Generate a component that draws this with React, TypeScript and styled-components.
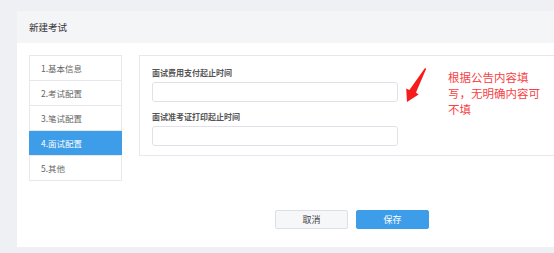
import styled, { createGlobalStyle } from "styled-components";

const GlobalStyle = createGlobalStyle`
  html, body {
    margin: 0;
    padding: 0;
    overflow: hidden;
    background: #eef0f4;
    font-family: "Noto Sans CJK SC", "Noto Sans", sans-serif;
  }
`;

const Page = styled.div`
  padding: 11px 0 0 17px;
`;

/* the card runs on past the right edge of the shot, so it has no right side */
const Card = styled.div`
  background: #fff;
`;

const CardHeader = styled.div`
  height: 32px;
  display: flex;
  align-items: center;
  padding-left: 12px;
  background: #f4f5f7;
  font-size: 9.5px;
  color: #333;
`;

const CardBody = styled.div`
  padding: 12px 0 18px 12px;
`;

const Row = styled.div`
  display: flex;
  align-items: flex-start;
  gap: 17px;
`;

const Steps = styled.ul`
  width: 93px;
  margin: 0;
  padding: 0;
  list-style: none;
  border: 1px solid #e6e8ee;
  border-bottom: none;
  box-sizing: border-box;
`;

const Step = styled.li<{ $active?: boolean }>`
  height: 24px;
  display: flex;
  align-items: center;
  border-bottom: 1px solid #e6e8ee;
  font-size: 8.5px;
  color: ${(p) => (p.$active ? "#fff" : "#666")};
  background: ${(p) => (p.$active ? "#3e9de9" : "#fff")};
  margin: ${(p) => (p.$active ? "0 -1px" : "0")};
  padding-left: ${(p) => (p.$active ? "12px" : "11px")};
`;

const Panel = styled.div`
  flex: 1;
  display: flex;
  align-items: flex-start;
  border: 1px solid #e6e8ee;
  border-right: none;
  padding: 11px 0 9px 12px;
`;

const Form = styled.div`
  width: 246px;
  display: flex;
  flex-direction: column;
`;

const Label = styled.div<{ $gap?: number }>`
  font-size: 8px;
  font-weight: bold;
  color: #555;
  line-height: 12px;
  margin-top: ${(p) => p.$gap ?? 0}px;
  margin-bottom: 3px;
`;

const Input = styled.input`
  height: 20px;
  box-sizing: border-box;
  border: 1px solid #dfe2e8;
  border-radius: 3px;
  outline: none;
  padding: 0 6px;
  font-size: 9px;
`;

const Arrow = styled.svg`
  margin: 1px 0 0 6px;
  flex-shrink: 0;
`;

const Note = styled.div`
  width: 96px;
  margin: 2px 0 0 20px;
  font-size: 11.5px;
  line-height: 16px;
  color: #f73f45;
`;

const Actions = styled.div`
  display: flex;
  gap: 8px;
  margin-top: 29px;
  padding-left: 246px;
`;

const Button = styled.button<{ $primary?: boolean }>`
  width: 73px;
  height: 19px;
  padding: 0;
  border-radius: 2px;
  font-family: inherit;
  font-size: 9px;
  border: 1px solid ${(p) => (p.$primary ? "#3e9de9" : "#dcdfe6")};
  background: ${(p) => (p.$primary ? "#3e9de9" : "#f6f7f9")};
  color: ${(p) => (p.$primary ? "#fff" : "#444")};
`;

const steps = ["1.基本信息", "2.考试配置", "3.笔试配置", "4.面试配置", "5.其他"];

export default function App() {
  return (
    <>
      <GlobalStyle />
      <Page>
        <Card>
          <CardHeader>新建考试</CardHeader>
          <CardBody>
            <Row>
              <Steps>
                {steps.map((s, i) => (
                  <Step key={s} $active={i === 3}>
                    {s}
                  </Step>
                ))}
              </Steps>
              <Panel>
                <Form>
                  <Label>面试费用支付起止时间</Label>
                  <Input />
                  <Label $gap={9}>面试准考证打印起止时间</Label>
                  <Input />
                </Form>
                <Arrow width="24" height="36" viewBox="0 0 24 36">
                  <polygon
                    points="21,0 22.2,0.8 12,24.5 14.6,26.5 3,34 2.2,20.5 5.4,22"
                    fill="#f61c1c"
                  />
                </Arrow>
                <Note>根据公告内容填写，无明确内容可不填</Note>
              </Panel>
            </Row>
            <Actions>
              <Button>取消</Button>
              <Button $primary>保存</Button>
            </Actions>
          </CardBody>
        </Card>
      </Page>
    </>
  );
}
